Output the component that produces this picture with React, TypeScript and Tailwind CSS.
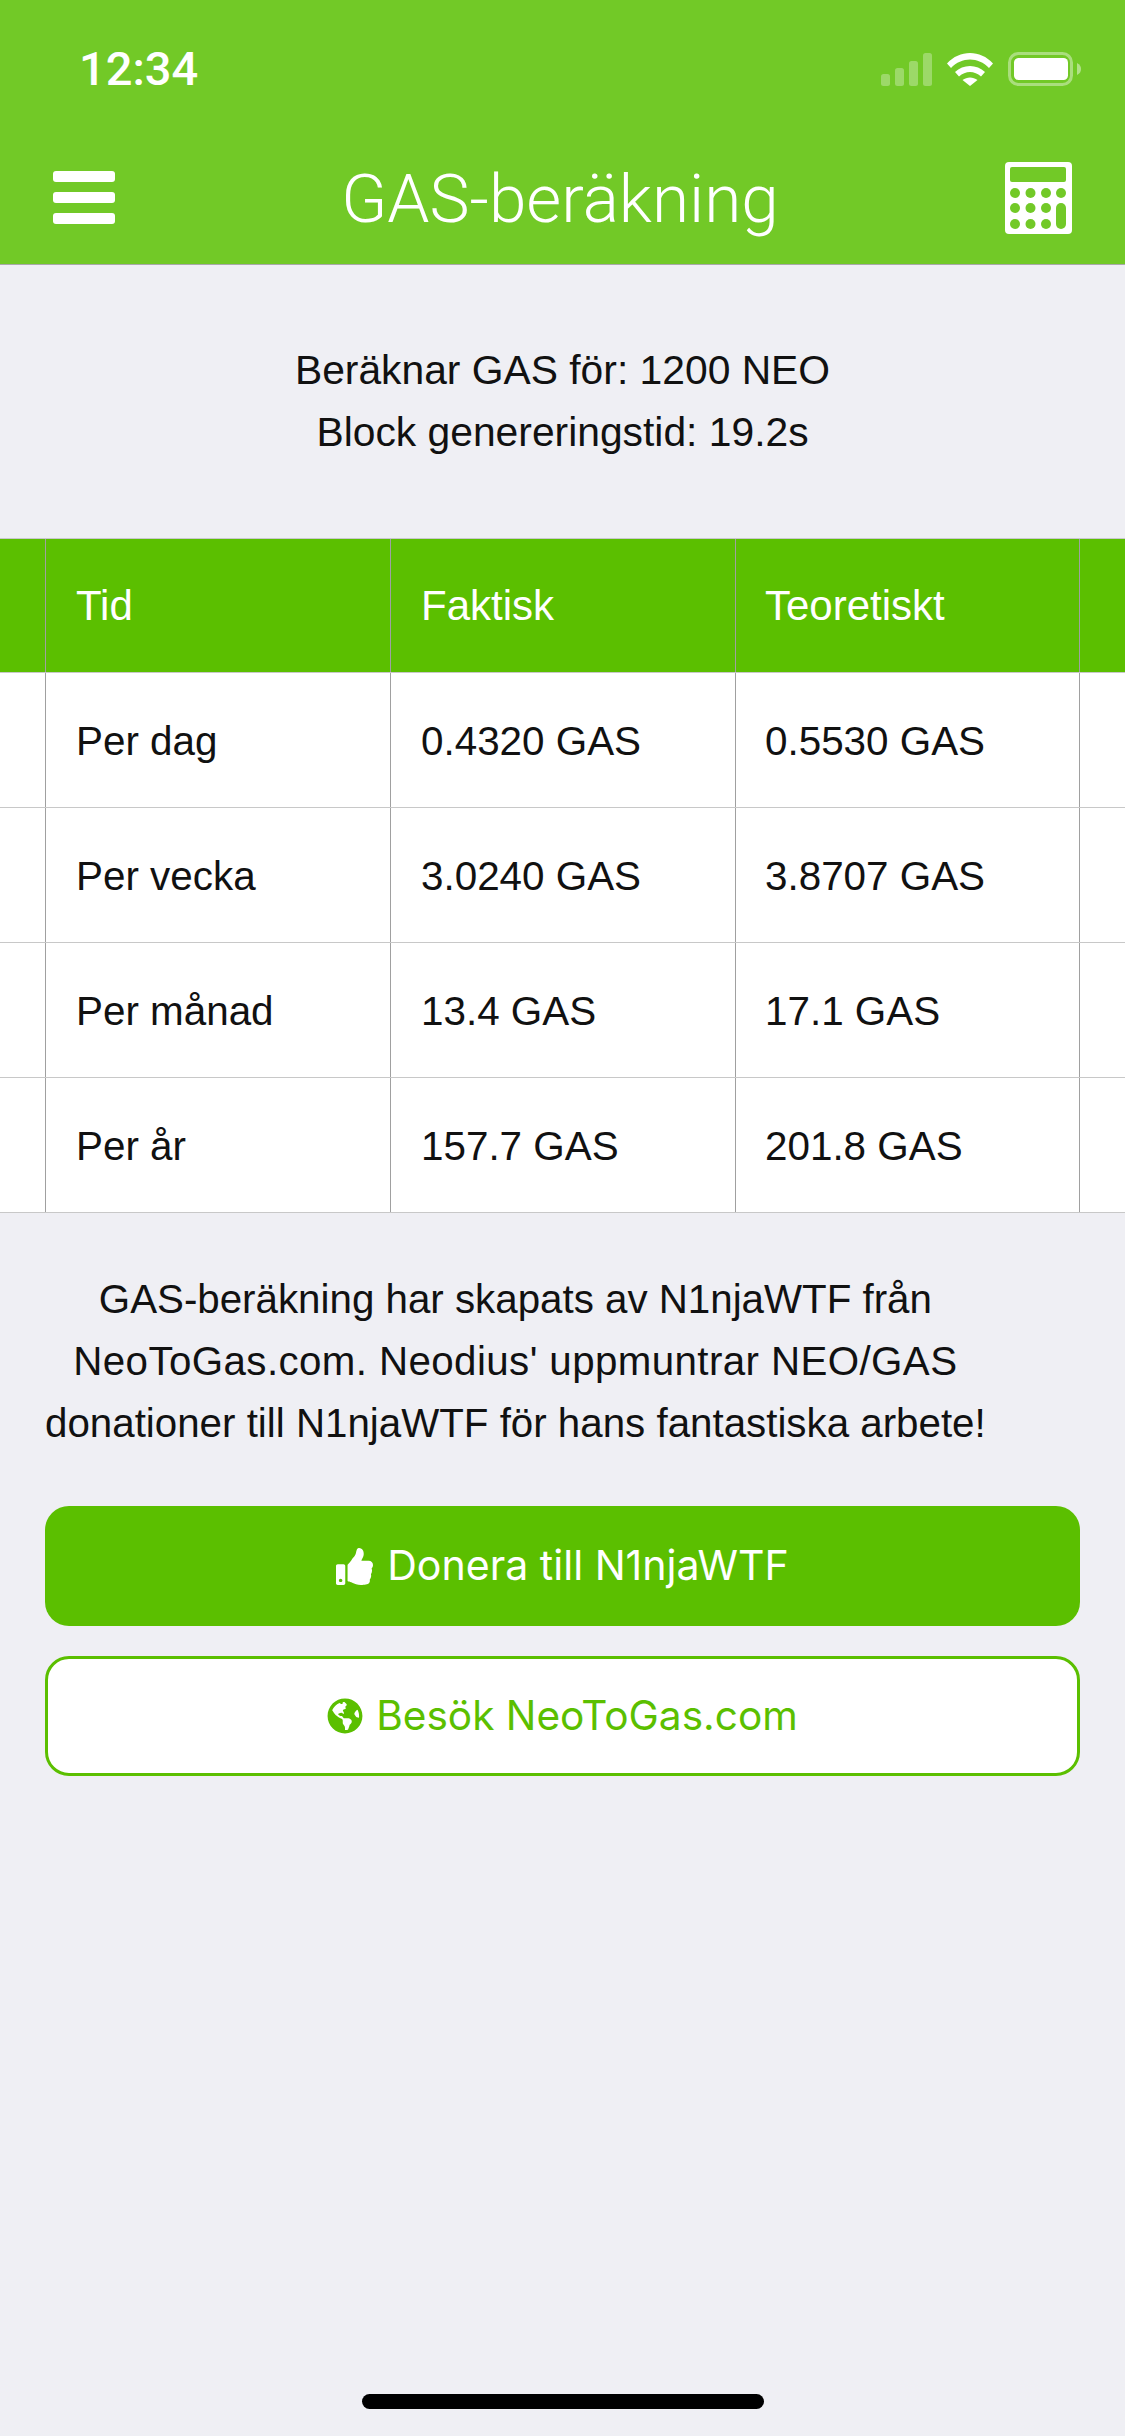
import { FaThumbsUp, FaGlobeAmericas } from 'react-icons/fa';

const rows = [
  ['Per dag', '0.4320 GAS', '0.5530 GAS'],
  ['Per vecka', '3.0240 GAS', '3.8707 GAS'],
  ['Per månad', '13.4 GAS', '17.1 GAS'],
  ['Per år', '157.7 GAS', '201.8 GAS'],
];

function SignalIcon() {
  return (
    <svg width="51" height="33" viewBox="0 0 51 33" fill="#fff" fillOpacity="0.3">
      <rect x="0" y="21" width="9" height="12" rx="2.5" />
      <rect x="14" y="15" width="9" height="18" rx="2.5" />
      <rect x="28" y="8" width="9" height="25" rx="2.5" />
      <rect x="42" y="0" width="9" height="33" rx="2.5" />
    </svg>
  );
}

function WifiIcon() {
  return (
    <svg width="46" height="33" viewBox="0 0 46 33" fill="#fff">
      <path d="M0 10.500C12.500 -3.500 33.500 -3.500 46 10.500L42 15C31.500 3.500 14.500 3.500 4 15Z" />
      <path d="M8 19C16 11 30 11 38 19L34 23.500C27.500 17.500 18.500 17.500 12 23.500Z" />
      <path d="M15.500 27C20 23.500 26 23.500 30.500 27L23 33Z" />
    </svg>
  );
}

function BatteryIcon() {
  return (
    <svg width="73" height="34" viewBox="0 0 73 34" fill="none">
      <rect x="1.500" y="1.500" width="62" height="31" rx="9" stroke="#fff" strokeOpacity="0.4" strokeWidth="3" />
      <rect x="6" y="6" width="54" height="22" rx="4.500" fill="#fff" />
      <path d="M69 11C72 12.500 73 14.500 73 17C73 19.500 72 21.500 69 23Z" fill="#fff" fillOpacity="0.45" />
    </svg>
  );
}

function CalculatorIcon() {
  return (
    <svg width="67" height="72" viewBox="0 0 67 72">
      <rect x="0" y="0" width="67" height="72" rx="4" fill="#fff" />
      <g fill="#72c927">
        <rect x="5" y="5" width="56" height="15" rx="2" />
        <circle cx="10" cy="31" r="5" />
        <circle cx="25.500" cy="31" r="5" />
        <circle cx="41" cy="31" r="5" />
        <circle cx="56" cy="31" r="5" />
        <circle cx="10" cy="46" r="5" />
        <circle cx="25.500" cy="46" r="5" />
        <circle cx="41" cy="46" r="5" />
        <circle cx="10" cy="62" r="5" />
        <circle cx="25.500" cy="62" r="5" />
        <circle cx="41" cy="62" r="5" />
        <rect x="51" y="41" width="10" height="26" rx="5" />
      </g>
    </svg>
  );
}

function Cell({ text, header, last }: { text: string; header?: boolean; last?: boolean }) {
  return (
    <div
      className={`${last ? 'w-[344px] pl-[29px]' : 'w-[345px] pl-[30px]'} shrink-0 border-r border-[#a0a0a0] flex items-center ${
        header ? 'text-[42px] text-white' : 'text-[40.4px] pt-[2px] text-[#111111]'
      }`}
    >
      {text}
    </div>
  );
}

export default function App() {
  return (
    <div className="relative h-[2436px] w-[1125px] overflow-hidden bg-[#efeff4] font-['Liberation_Sans',sans-serif]">
      {/* Header */}
      <div className="h-[265px] bg-[#72c927] border-b border-[#a9a9a9] flex flex-col">
        <div className="h-[132px] flex items-center justify-between pl-[79px] pr-[44px] pt-[6px]">
          <span className="text-[47px] font-['Roboto',sans-serif] font-medium text-white">12:34</span>
          <div className="flex items-center gap-[15px]">
            <SignalIcon />
            <WifiIcon />
            <BatteryIcon />
          </div>
        </div>
        <div className="flex-1 flex items-center justify-between pl-[53px] pr-[53px] pb-[1px]">
          <div className="w-[62px] flex flex-col gap-[10px] mt-[-1px]">
            <div className="h-[11px] rounded-[3px] bg-white" />
            <div className="h-[11px] rounded-[3px] bg-white" />
            <div className="h-[11px] rounded-[3px] bg-white" />
          </div>
          <span className="text-[67.5px] font-['Roboto',sans-serif] font-light pt-[2px] text-white">GAS-beräkning</span>
          <CalculatorIcon />
        </div>
      </div>

      {/* Intro */}
      <div className="pt-[74px] h-[273px] text-center text-[40.8px] leading-[62px] text-[#111111]">
        <p>Beräknar GAS för: 1200 NEO</p>
        <p>Block genereringstid: 19.2s</p>
      </div>

      {/* Table */}
      <div className="border-t border-[#c8c8cc]">
        <div className="h-[133px] flex bg-[#5bbf00]">
          <div className="w-[46px] shrink-0 border-r border-[#a0a0a0]" />
          <Cell text="Tid" header />
          <Cell text="Faktisk" header />
          <Cell text="Teoretiskt" header last />
        </div>
        {rows.map((row) => (
          <div key={row[0]} className="h-[135px] flex bg-white border-t border-[#c8c8c8]">
            <div className="w-[46px] shrink-0 border-r border-[#a0a0a0]" />
            <Cell text={row[0]} />
            <Cell text={row[1]} />
            <Cell text={row[2]} last />
          </div>
        ))}
        <div className="border-t border-[#c8c8c8]" />
      </div>

      {/* Credits and buttons */}
      <div className="px-[45px] pt-[56px]">
        <p className="w-fit text-center text-[40.3px] leading-[62px] text-[#111111]">
          GAS-beräkning har skapats av N1njaWTF från
          <br />
          <span className="tracking-[0.4px]">NeoToGas.com. Neodius' uppmuntrar NEO/GAS</span>
          <br />
          donationer till N1njaWTF för hans fantastiska arbete!
        </p>
        <button className="mt-[51px] h-[120px] w-full rounded-[24px] bg-[#5bbf00] flex items-center justify-center gap-[14px] text-white text-[41.1px] font-['Inter',sans-serif]">
          <FaThumbsUp className="w-[37px] h-[37px]" />
          Donera till N1njaWTF
        </button>
        <button className="mt-[30px] h-[120px] w-full rounded-[24px] bg-white border-[3px] border-[#5bbf00] flex items-center justify-center gap-[13px] text-[#5bbf00] text-[40.6px] font-['Inter',sans-serif]">
          <FaGlobeAmericas className="w-[36px] h-[36px]" />
          Besök NeoToGas.com
        </button>
      </div>

      {/* Home indicator */}
      <div className="absolute bottom-[27px] left-[362px] h-[15px] w-[402px] rounded-full bg-black" />
    </div>
  );
}
